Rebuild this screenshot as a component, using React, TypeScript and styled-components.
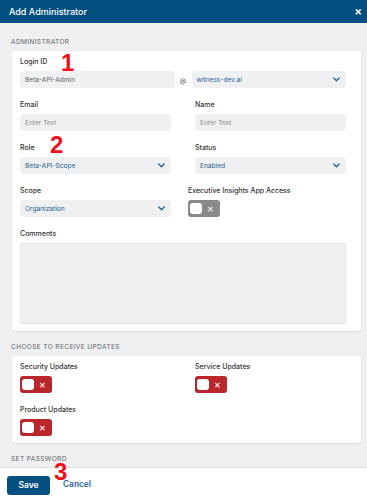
import React from "react";
import styled, { createGlobalStyle } from "styled-components";

const Global = createGlobalStyle`
  html, body { margin: 0; padding: 0; }
  body { font-family: Inter, "Noto Sans", sans-serif; background: #eef0f2; }
  * { box-sizing: border-box; }
`;

const Modal = styled.div`
  width: 367px;
  height: 499px;
  display: flex;
  flex-direction: column;
  position: relative;
  overflow: hidden;
  background: #eef0f2;
`;

const Header = styled.div`
  height: 23px;
  flex: none;
  background: #034f80;
  color: #fff;
  display: flex;
  align-items: center;
  justify-content: space-between;
  padding: 0 5px 0 9px;
  font-size: 9px;
  font-weight: 500;
`;

const Close = styled.span`
  font-size: 11px;
  font-weight: 700;
  line-height: 1;
`;

const Body = styled.div`
  flex: 1;
  overflow: hidden;
  padding: 14px 6px 0 12px;
`;

const Section = styled.section`
  margin-bottom: 11px;
`;

const SectionTitle = styled.div`
  height: 10px;
  line-height: 10px;
  font-size: 6.6px;
  letter-spacing: 0.35px;
  color: #5f6368;
  text-transform: uppercase;
  margin: 0 0 4px -1px;
`;

const Card = styled.div`
  background: #fff;
  border-radius: 3px;
  box-shadow: 0 1px 2px rgba(0, 0, 0, 0.08);
  padding: 6px 8px 7px 8px;
  display: grid;
  grid-template-columns: 151px 151px;
  column-gap: 24px;
  row-gap: 12px;
`;

const Field = styled.div<{ $span?: boolean; $shift?: number }>`
  display: flex;
  flex-direction: column;
  grid-column: ${(p) => (p.$span ? "1 / -1" : "auto")};
  margin-left: ${(p) => (p.$shift ? `${p.$shift}px` : "0")};
  min-width: 0;
`;

const Label = styled.div`
  height: 10px;
  line-height: 10px;
  font-size: 7px;
  font-weight: 500;
  color: #333;
  margin-bottom: 4px;
  white-space: nowrap;
`;

const Box = styled.div<{ $tone?: "value" | "placeholder" | "link"; $grow?: boolean }>`
  height: 17px;
  flex: ${(p) => (p.$grow ? "1 1 0" : "none")};
  border-radius: 4px;
  background: #eef0f2;
  display: flex;
  align-items: center;
  justify-content: space-between;
  padding: 0 6px 0 5px;
  font-size: 6.6px;
  color: ${(p) =>
    p.$tone === "link" ? "#27608f" : p.$tone === "placeholder" ? "#8a8d91" : "#5f6368"};
  min-width: 0;
`;

const LoginRow = styled.div`
  display: flex;
  align-items: center;
`;

const At = styled.span`
  width: 17px;
  text-align: center;
  font-size: 6.5px;
  color: #555;
  padding-top: 2px;
`;

const TextArea = styled.div`
  height: 81px;
  border-radius: 3px;
  background: #eef0f2;
  box-shadow: inset 0 0 0 1px #e4e6e8, 0 0 2px rgba(0, 0, 0, 0.06);
`;

const Toggle = styled.div<{ $color: string }>`
  width: 32px;
  height: 17px;
  border-radius: 3px;
  background: ${(p) => p.$color};
  display: flex;
  align-items: center;
  padding: 0 2px;
  gap: 4px;
`;

const Knob = styled.span`
  width: 12px;
  height: 11px;
  border-radius: 3px;
  background: #fff;
`;

const Cross = styled.span<{ $tint: string }>`
  color: ${(p) => p.$tint};
  font-size: 8px;
  font-weight: 600;
  line-height: 1;
  margin-left: 1px;
`;

const Footer = styled.div`
  flex: none;
  height: 32px;
  background: #fff;
  border-top: 1px solid #dfe1e4;
  display: flex;
  align-items: center;
  padding: 0 7px;
  gap: 13px;
`;

const SaveButton = styled.button`
  width: 43px;
  height: 19px;
  margin-top: 3px;
  border: none;
  border-radius: 3px;
  background: #034f80;
  color: #fff;
  font-family: Inter, sans-serif;
  font-size: 8.5px;
  font-weight: 600;
  line-height: 19px;
  padding: 0;
`;

const CancelLink = styled.span`
  font-size: 8.3px;
  font-weight: 600;
  color: #2a689a;
  margin-top: 1px;
`;

const Marker = styled.span<{ $x: number; $y: number }>`
  position: absolute;
  left: ${(p) => p.$x}px;
  top: ${(p) => p.$y}px;
  font-family: "Liberation Sans", Arial, sans-serif;
  font-weight: 700;
  font-size: 24px;
  line-height: 1;
  color: #f0101c;
  pointer-events: none;
`;

const Chevron = () => (
  <svg width="7" height="5" viewBox="0 0 7 5" fill="none">
    <polyline points="0.8,1 3.5,3.8 6.2,1" stroke="#27608f" strokeWidth="1.3" strokeLinecap="round" strokeLinejoin="round" />
  </svg>
);

const Select = ({ value, grow }: { value: string; grow?: boolean }) => (
  <Box $tone="link" $grow={grow}>
    <span>{value}</span>
    <Chevron />
  </Box>
);

const Switch = ({ color, tint }: { color: string; tint: string }) => (
  <Toggle $color={color}>
    <Knob />
    <Cross $tint={tint}>✕</Cross>
  </Toggle>
);

const RED = "#b9262c";

export default function App() {
  return (
    <Modal>
      <Global />
      <Header>
        <span>Add Administrator</span>
        <Close>×</Close>
      </Header>
      <Body>
        <Section>
          <SectionTitle>Administrator</SectionTitle>
          <Card>
            <Field $span>
              <Label>Login ID</Label>
              <LoginRow>
                <Box $grow>Beta-API-Admin</Box>
                <At>@</At>
                <Select value="witness-dev.ai" grow />
              </LoginRow>
            </Field>
            <Field>
              <Label>Email</Label>
              <Box $tone="placeholder">Enter Text</Box>
            </Field>
            <Field>
              <Label>Name</Label>
              <Box $tone="placeholder">Enter Text</Box>
            </Field>
            <Field>
              <Label>Role</Label>
              <Select value="Beta-API-Scope" />
            </Field>
            <Field>
              <Label>Status</Label>
              <Select value="Enabled" />
            </Field>
            <Field>
              <Label>Scope</Label>
              <Select value="Organization" />
            </Field>
            <Field $shift={-7}>
              <Label>Executive Insights App Access</Label>
              <Switch color="#8a8a8a" tint="#e4e4e4" />
            </Field>
            <Field $span>
              <Label>Comments</Label>
              <TextArea />
            </Field>
          </Card>
        </Section>
        <Section>
          <SectionTitle>Choose to receive updates</SectionTitle>
          <Card>
            <Field>
              <Label>Security Updates</Label>
              <Switch color={RED} tint="#f6dcdc" />
            </Field>
            <Field>
              <Label>Service Updates</Label>
              <Switch color={RED} tint="#f6dcdc" />
            </Field>
            <Field>
              <Label>Product Updates</Label>
              <Switch color={RED} tint="#f6dcdc" />
            </Field>
          </Card>
        </Section>
        <Section>
          <SectionTitle>Set password</SectionTitle>
          <Card>
            <Field>
              <Label>Password</Label>
              <Box $tone="placeholder">Enter Text</Box>
            </Field>
          </Card>
        </Section>
      </Body>
      <Footer>
        <SaveButton>Save</SaveButton>
        <CancelLink>Cancel</CancelLink>
      </Footer>
      <Marker $x={61} $y={51}>1</Marker>
      <Marker $x={50} $y={133}>2</Marker>
      <Marker $x={54} $y={460}>3</Marker>
    </Modal>
  );
}
